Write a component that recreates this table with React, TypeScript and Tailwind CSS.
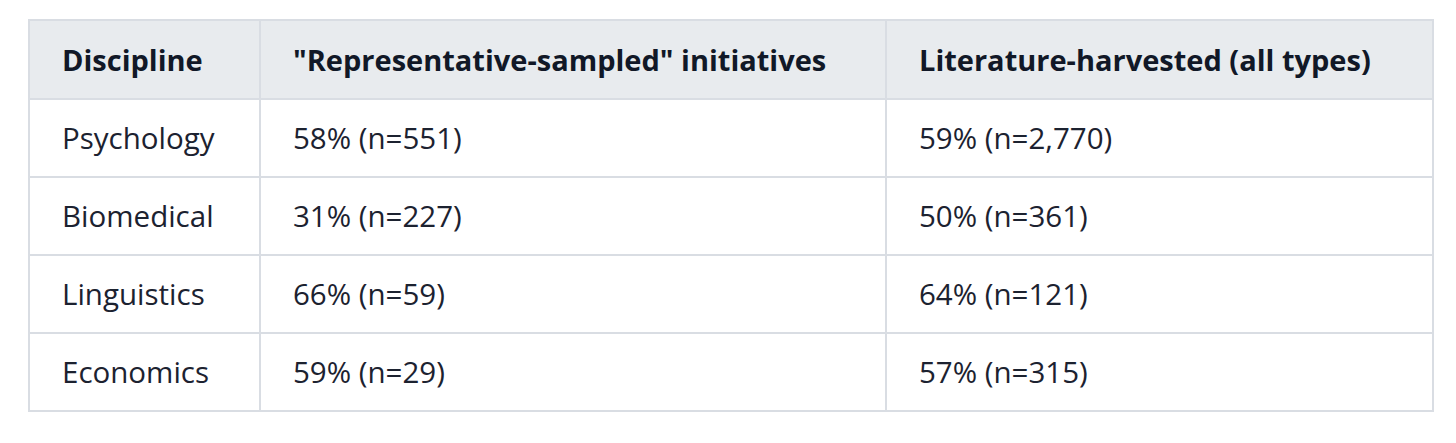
import React from 'react';

const rows = [
  ['Psychology', '58% (n=551)', '59% (n=2,770)'],
  ['Biomedical', '31% (n=227)', '50% (n=361)'],
  ['Linguistics', '66% (n=59)', '64% (n=121)'],
  ['Economics', '59% (n=29)', '57% (n=315)'],
];

export default function App() {
  return (
    <div className="w-[1456px] h-[443px] bg-white pt-[19px] pl-[28px]" style={{ fontFamily: '"Open Sans", "Noto Sans", sans-serif' }}>
      <table className="table-fixed border-collapse border-2 border-[#d9dde3] w-[1404px]">
        <colgroup>
          <col className="w-[231px]" />
          <col className="w-[626px]" />
          <col className="w-[547px]" />
        </colgroup>
        <thead>
          <tr className="bg-[#e8ebee] h-[79px]">
            <th className="text-left font-bold text-[29px] text-[#111827] px-[32px] border-2 border-[#d9dde3]">Discipline</th>
            <th className="text-left font-bold text-[29px] text-[#111827] px-[32px] border-2 border-[#d9dde3]">"Representative-sampled" initiatives</th>
            <th className="text-left font-bold text-[29px] text-[#111827] px-[32px] border-2 border-[#d9dde3]">Literature-harvested (all types)</th>
          </tr>
        </thead>
        <tbody>
          {rows.map((r) => (
            <tr key={r[0]} className="h-[78px]">
              {r.map((c, i) => (
                <td key={i} className="text-left text-[29.5px] text-[#1c2230] px-[32px] border-2 border-[#d9dde3]">{c}</td>
              ))}
            </tr>
          ))}
        </tbody>
      </table>
    </div>
  );
}
